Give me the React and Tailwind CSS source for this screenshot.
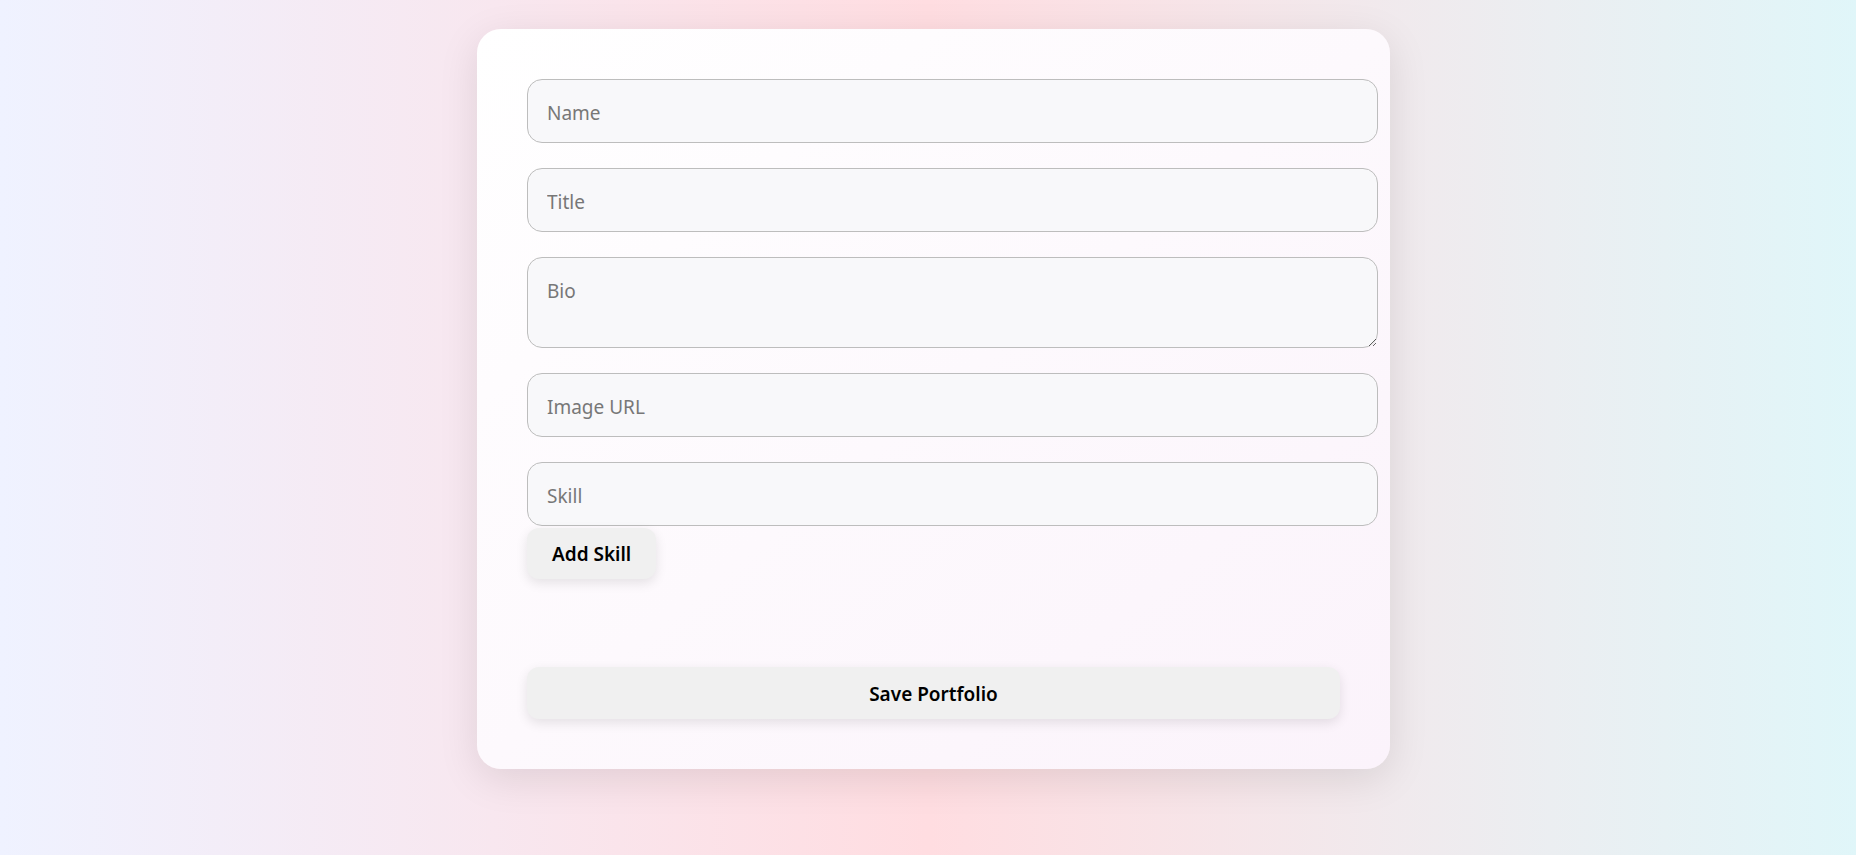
const FIELD =
  'block w-[851px] h-[64px] px-[19px] border border-[#bdbdbd] rounded-[15px] bg-[#f8f8fa] text-[19px] text-[#222] placeholder:text-[#777] outline-none';

export default function App() {
  return (
    <div className="min-h-screen flex justify-center pt-[29px] pl-[11px] bg-linear-to-r from-[#eff2ff] via-[#ffdde1] to-[#e0f6f9] font-['Noto_Sans',sans-serif]">
      <div className="w-[913px] h-[740px] rounded-[24px] p-[50px] bg-linear-to-br from-white to-[#fbf3fb] shadow-[0_10px_40px_rgba(0,0,0,0.1)]">
        <input className={`${FIELD} pt-[4px] mb-[25px]`} placeholder="Name" />
        <input className={`${FIELD} pt-[4px] mb-[25px]`} placeholder="Title" />
        <textarea className={`${FIELD} h-[91px] pt-[19px] pb-[15px] mb-[25px]`} placeholder="Bio" />
        <input className={`${FIELD} pt-[4px] mb-[25px]`} placeholder="Image URL" />
        <input className={`${FIELD} pt-[4px] mb-[2px]`} placeholder="Skill" />
        <button className="h-[51px] px-[25px] pt-[2px] rounded-[12px] bg-[#f0f0f0] text-[19px] font-semibold text-black shadow-[0_4px_12px_rgba(0,0,0,0.1)]">
          Add Skill
        </button>
        <ul className="h-[88px]"></ul>
        <button className="w-full h-[52px] pt-[2px] rounded-[12px] bg-[#f0f0f0] text-[19px] font-semibold text-black shadow-[0_4px_12px_rgba(0,0,0,0.1)]">
          Save Portfolio
        </button>
      </div>
    </div>
  );
}
